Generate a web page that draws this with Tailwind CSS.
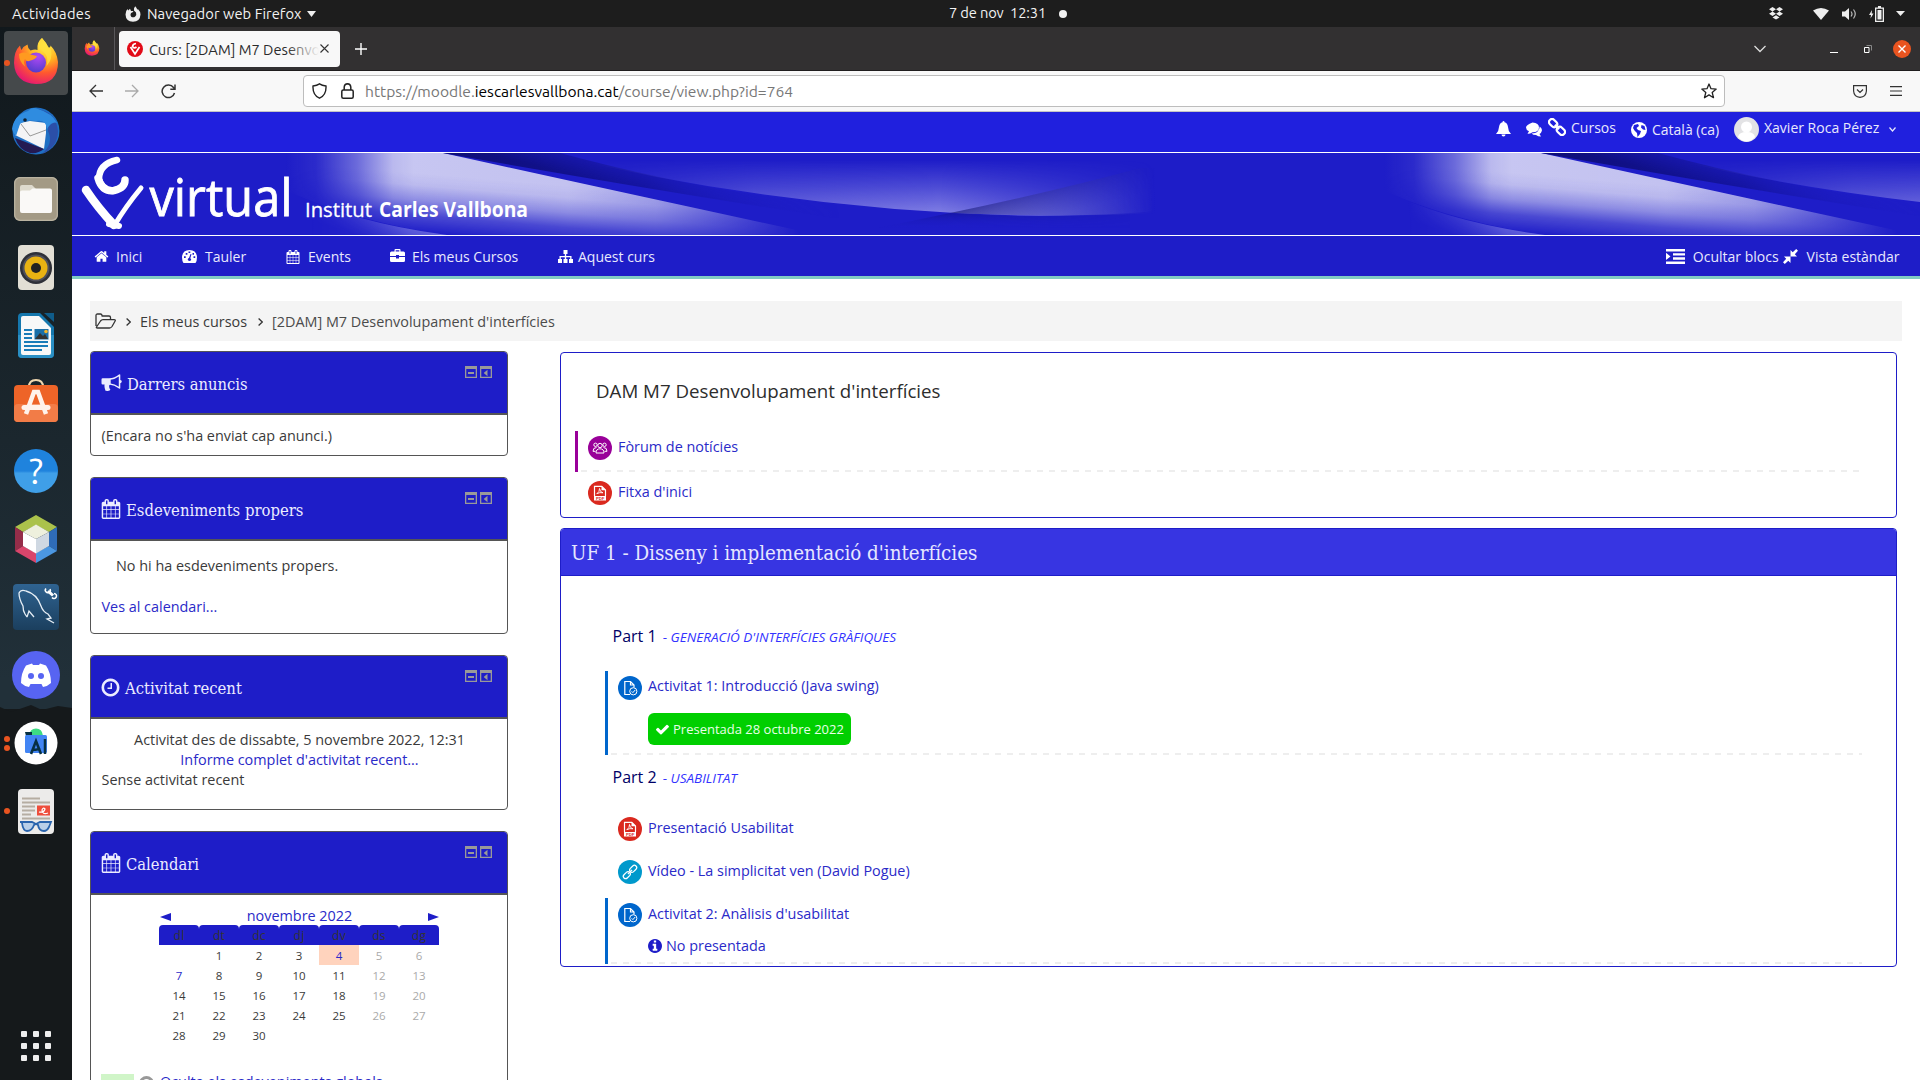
<!DOCTYPE html>
<html lang="ca">
<head>
<meta charset="utf-8">
<title>Curs: [2DAM] M7 Desenvolupament d'interfícies</title>
<script src="https://cdn.jsdelivr.net/npm/@tailwindcss/browser@4"></script>
</head>
<body class="flex h-[1080px] w-[1920px] flex-col overflow-hidden bg-white font-['Open_Sans',sans-serif] text-[14.400px] leading-5 text-[#3a3a3a]">

<svg class="absolute size-0">
  <defs>
    <symbol id="home" viewBox="0 0 1792 1792"><path d="M1472 992v480q0 26-19 45t-45 19h-384v-384h-256v384h-384q-26 0-45-19t-19-45v-480q0-1 .5-3t.5-3l575-474 575 474q1 2 1 6zm223-69l-62 74q-8 9-21 11h-3q-13 0-21-7l-692-577-692 577q-12 8-24 7-13-2-21-11l-62-74q-8-10-7-23.5t11-21.500l719-599q32-26 76-26t76 26l244 204v-195q0-14 9-23t23-9h192q14 0 23 9t9 23v408l219 182q10 8 11 21.500t-7 23.500z"/></symbol>
    <symbol id="cal" viewBox="0 0 1792 1792"><path d="M192 1664h288v-288h-288v288zm352 0h320v-288h-320v288zm-352-352h288v-320h-288v320zm352 0h320v-320h-320v320zm-352-384h288v-288h-288v288zm736 736h320v-288h-320v288zm-384-736h320v-288h-320v288zm768 736h288v-288h-288v288zm-384-352h320v-320h-320v320zm-352-864v-288q0-13-9.500-22.500t-22.500-9.500h-64q-13 0-22.500 9.500t-9.500 22.500v288q0 13 9.500 22.500t22.500 9.500h64q13 0 22.500-9.500t9.500-22.500zm736 864h288v-320h-288v320zm-384-384h320v-288h-320v288zm384 0h288v-288h-288v288zm32-480v-288q0-13-9.500-22.500t-22.500-9.500h-64q-13 0-22.500 9.500t-9.500 22.500v288q0 13 9.500 22.500t22.500 9.500h64q13 0 22.500-9.500t9.500-22.500zm384-64v1280q0 52-38 90t-90 38h-1408q-52 0-90-38t-38-90v-1280q0-52 38-90t90-38h128v-96q0-66 47-113t113-47h64q66 0 113 47t47 113v96h384v-96q0-66 47-113t113-47h64q66 0 113 47t47 113v96h128q52 0 90 38t38 90z"/></symbol>
    <symbol id="clock" viewBox="0 0 1792 1792"><path d="M1024 544v448q0 14-9 23t-23 9h-320q-14 0-23-9t-9-23v-64q0-14 9-23t23-9h224v-352q0-14 9-23t23-9h64q14 0 23 9t9 23zm416 352q0-148-73-273t-198-198-273-73-273 73-198 198-73 273 73 273 198 198 273 73 273-73 198-198 73-273zm224 0q0 209-103 385.500t-279.500 279.500-385.500 103-385.500-103-279.500-279.500-103-385.500 103-385.500 279.500-279.500 385.500-103 385.500 103 279.500 279.500 103 385.500z"/></symbol>
    <symbol id="info" viewBox="128 128 1536 1536"><path d="M1152 1376v-160q0-14-9-23t-23-9h-96v-512q0-14-9-23t-23-9h-320q-14 0-23 9t-9 23v160q0 14 9 23t23 9h96v320h-96q-14 0-23 9t-9 23v160q0 14 9 23t23 9h448q14 0 23-9t9-23zm-128-896v-160q0-14-9-23t-23-9h-192q-14 0-23 9t-9 23v160q0 14 9 23t23 9h192q14 0 23-9t9-23zm640 416q0 209-103 385.500t-279.500 279.500-385.500 103-385.500-103-279.500-279.500-103-385.500 103-385.500 279.500-279.500 385.500-103 385.500 103 279.500 279.500 103 385.500z"/></symbol>
    <symbol id="check" viewBox="120 290 1560 1240"><path d="M1671 566q0 40-28 68l-724 724-136 136q-28 28-68 28t-68-28l-136-136-362-362q-28-28-28-68t28-68l136-136q28-28 68-28t68 28l294 295 656-657q28-28 68-28t68 28l136 136q28 28 28 68z"/></symbol>
    <symbol id="horn" viewBox="0 0 21 18"><path d="M0.500 5.500Q0.500 4.300 1.700 4.300H8Q14 4 18 0.500Q19.300-.2 19.300 1V6Q20.800 6.300 20.800 7.600T19.300 9.200V14Q19.300 15.300 18 14.500Q13 11 9 10.700Q7.600 11.500 8.300 13Q8 14.300 9.400 15.300Q9.200 17 6.500 16.900L4.500 16.700Q3 13 3.600 10.500H1.700Q.5 10.500 .5 9.300ZM17.800 12.700V2.500Q13.500 5.500 9.700 5.700V9.400Q13.500 9.700 17.800 12.700Z" fill-rule="evenodd"/></symbol>
    <symbol id="dock" viewBox="0 0 27 12"><path fill="#999" fill-rule="evenodd" d="M0 0H12V12H0ZM1.300 3V10.700H10.700V3ZM15 0H27V12H15ZM16.300 3V10.700H25.700V3Z"/><path d="M3 6H9V8H3ZM22.500 3.700V10.300L18.700 7Z" fill="#999"/></symbol>
    <symbol id="assign" viewBox="0 0 24 24"><circle cx="12" cy="12" r="12" fill="#0066cc"/><path d="M12 18.500H6.800V5.500H12.500L16 9V11.500M12.500 5.500V9H16" fill="none" stroke="#fff" stroke-width="1.200"/><circle cx="15.300" cy="15.300" r="3.600" fill="#0066cc" stroke="#fff"/><path d="M13.700 15.400L14.900 16.600L17.200 14" fill="none" stroke="#fff"/></symbol>
    <symbol id="pdf" viewBox="0 0 24 24"><circle cx="12" cy="12" r="12" fill="#da291f"/><path d="M6.500 15V5.400H13.800L17.500 9V15" fill="none" stroke="#fff" stroke-width="1.200"/><path d="M13.500 5V9.300H18ZM6 15H18V19.500H6Z" fill="#fff"/><path d="M8.800 12.700Q11.700 11 11.500 7.500Q12 11.300 15 11.800Q12 11 8.800 12.700Z" fill="none" stroke="#fff" stroke-width=".9"/><text x="8" y="18.800" font-size="4.200" font-weight="700" fill="#da291f" font-family="Liberation Sans, sans-serif">PDF</text></symbol>
    <symbol id="link" viewBox="0 0 24 24"><g fill="none" stroke-width="1.200" transform="rotate(-45 12 12)"><rect x="3.500" y="9.700" width="8" height="4.600" rx="2.300"/><rect x="12.500" y="9.700" width="8" height="4.600" rx="2.300"/><path d="M9 12H15"/></g></symbol>
    <radialGradient id="ffo" cx=".7" cy=".15" r="1"><stop offset="0" stop-color="#fff14a"/><stop offset=".35" stop-color="#ffb321"/><stop offset=".6" stop-color="#ff5a2e"/><stop offset=".95" stop-color="#e3107a"/></radialGradient>
    <radialGradient id="ffp" cx=".6" cy=".2" r=".9"><stop offset="0" stop-color="#b04af5"/><stop offset="1" stop-color="#4a3ac8"/></radialGradient>
    <symbol id="firefox" viewBox="0 0 46 48"><path d="M29 1Q34 6 35.500 11Q38 10 37.500 8.500Q44 15 45 25Q45 47 23 47Q2 46 1 26Q1 14 7 8.500Q7.500 11.500 8.500 13Q10.500 9 14.500 7.500Q14.500 11 17.500 13.500Q22 12 24.500 13Q23.500 5 29 1Z" fill="url(#ffo)"/><circle cx="23" cy="25.500" r="10" fill="url(#ffp)"/><path d="M6 17Q12 14 17.500 17.500L24 19Q23 22 17.500 23.500Q14 25.500 12 22Q10 25 12.500 30Q6 25 6 17Z" fill="#ff9a20"/><path d="M26 12Q37 17 33.500 29Q40 22 38 13Q33 7 29 1Q24 6 26 12Z" fill="#ffdf3f" opacity=".8"/></symbol>
  </defs>
</svg>

<!-- GNOME top bar -->
<header class="relative flex h-[27px] shrink-0 items-center bg-[#1d1d1d] font-['Ubuntu','Open_Sans',sans-serif] text-[14.700px] text-[#f2f2f2]">
  <span class="ml-3 w-[113px] tracking-[.3px]">Actividades</span>
  <svg class="size-4" viewBox="0 0 16 16" fill="#eee"><path fill-rule="evenodd" d="M10.200.3Q12 2 12.200 3.700L12.900 3Q15.500 5.500 15.500 8.500Q15 15.700 8 15.800Q.8 15.500.5 8.500Q.6 4.800 2.500 3L3.200 4.500L5 2.800L6 4.900H8.500Q8 6.500 6 7Q4.800 9 6.200 10.700Q8 12 10 10.700Q12 9 11 6.500L9 4.500Q8.500 2 10.200.3Z"/></svg>
  <span class="ml-1.5 w-[154px] whitespace-nowrap tracking-[.06px]">Navegador web Firefox</span>
  <svg class="ml-[6px] h-[6px] w-[9px]" viewBox="0 0 9 6" fill="#eee"><path d="M0 0H9L4.500 6Z"/></svg>
  <span class="absolute top-[3px] left-[949px] tracking-[-.15px]">7 de nov&nbsp; 12:31</span>
  <span class="absolute left-[1059px] size-2 rounded-full bg-[#f2f2f2]"></span>
  <div class="ml-auto flex items-center pr-[15px]">
    <svg class="mr-[30px] h-[13px] w-[14px]" viewBox="0 0 14 13" fill="#eee"><path d="M3.500 0L7 2.200L3.500 4.400L0 2.200ZM10.500 0L14 2.200L10.500 4.400L7 2.200ZM3.500 4.600L7 6.800L3.500 9L0 6.800ZM10.500 4.600L14 6.800L10.500 9L7 6.800ZM7 8.200L10.500 10.400L7 12.600L3.500 10.400Z"/></svg>
    <svg class="mr-[13px] h-3 w-4" viewBox="0 0 16 12" fill="#eee"><path d="M0 2.500Q8-2.500 16 2.500L8 12Z"/></svg>
    <svg class="mr-3 h-3.5 w-[15px]" viewBox="0 0 15 14" fill="#eee"><path d="M0 4.500H3L7 1V13L3 9.500H0Z"/><path d="M9 4.500Q11 7 9 9.500M11.500 2.500Q15 7 11.500 11.500" fill="none" stroke="#bbb" stroke-width="1.200"/></svg>
    <svg class="mr-3 h-4 w-[15px]" viewBox="0 0 15 16" fill="#eee"><path d="M3 4L0 9H2L1.500 12.500L4.500 7.500H2.700ZM9 0H12V1.500H15V16H6V1.500H9ZM7.300 2.800V14.700H13.700V2.800Z" fill-rule="evenodd"/><path d="M8.500 4H12.500V13.500H8.500Z"/></svg>
    <svg class="h-[5px] w-[9px]" viewBox="0 0 9 5" fill="#eee"><path d="M0 0H9L4.500 5Z"/></svg>
  </div>
</header>

<div class="flex min-h-0 flex-1">
  <!-- Dock -->
  <aside class="flex w-[72px] shrink-0 flex-col items-center bg-linear-to-b from-[#11181c] from-0% via-[#213039] via-62% to-[#213039] to-64% pt-0.5">
    <div class="relative flex h-[68px] w-full items-center justify-center"><div class="flex size-16 items-center justify-center rounded-[4px] bg-[#45494b]"><svg class="-mt-1 h-12 w-[46px]"><use href="#firefox"/></svg></div><i class="absolute left-1 size-1.5 rounded-full bg-[#e95420]"></i></div>
    <div class="flex h-[68px] items-center"><svg class="size-12" viewBox="0 0 48 48"><circle cx="24" cy="24" r="23.500" fill="#1f6fc4"/><path d="M24 2Q44 4 46 24Q46 40 30 47Q42 36 36 24Q38 12 24 2Z" fill="#2b4fa8"/><path d="M3 28L8 16L18 14L34 16V26L32 42Z" fill="#f4f4f6"/><path d="M9 17L18 29L34 23" fill="none" stroke="#999" stroke-width="1"/><path d="M0 22Q2 8 16 4Q20-1 26 2Q40 6 45 16Q40 14 35 22Q34 12 24 14Q14 12 8 17L4 29Q1 26 0 22Z" fill="#2f8ce0"/><path d="M3 31L32 42Q26 47 18 46Q7 43 3 31Z" fill="#241a52"/><circle cx="13" cy="13" r="1.800" fill="#123"/></svg></div>
    <div class="flex h-[68px] items-center"><svg class="size-11" viewBox="0 0 44 44"><rect width="44" height="44" rx="6" fill="#a39a85"/><rect x=".7" y=".7" width="42.600" height="42.600" rx="5.500" fill="none" stroke="#bab3a1" stroke-width="1.200"/><path d="M6 10Q6 8 8 8H18L22 12H34V20H6Z" fill="#dedacd"/><path d="M6 15Q6 13.500 8 13.500H16L18.500 11.500H36Q38 11.500 38 13.500V34Q38 36 36 36H8Q6 36 6 34Z" fill="#faf9f7"/></svg></div>
    <div class="flex h-[68px] items-center"><svg class="h-[45px] w-9" viewBox="0 0 36 45"><rect width="36" height="45" rx="4" fill="#e2dfd5"/><circle cx="18" cy="23" r="16" fill="#2e3038"/><circle cx="18" cy="23" r="13.500" fill="#50505a"/><circle cx="18" cy="23" r="11.500" fill="#e9b212"/><circle cx="18" cy="23" r="5" fill="#222"/></svg></div>
    <div class="flex h-[68px] items-center"><svg class="h-[45px] w-9" viewBox="0 0 36 45"><path d="M4 0H22L36 14V41Q36 45 32 45H4Q0 45 0 41V4Q0 0 4 0Z" fill="#1577ad"/><path d="M0 22H36V41Q36 45 32 45H4Q0 45 0 41Z" fill="#2a8fc4"/><path d="M26 0H36V9Z" fill="#0f5c8a"/><path d="M5 3H21L33 15V40Q33 42 31 42H5Q3 42 3 40V5Q3 3 5 3Z" fill="#f8f8f8"/><path d="M6 17H14M6 21H14M6 25H14M6 29H30M6 33H30M6 37H24" stroke="#1a7cb8" stroke-width="2"/><rect x="16.500" y="16" width="14" height="10.500" fill="#1a6fa8"/><path d="M17 26L22 20L25 23L27 21L30 26Z" fill="#333"/><circle cx="28" cy="18.500" r="1.800" fill="#f5b52a"/></svg></div>
    <div class="flex h-[68px] items-center pb-1"><svg class="h-[46px] w-11" viewBox="0 0 44 46"><path d="M15 9Q15 2 22 2T29 9" fill="none" stroke="#f0d8b0" stroke-width="2"/><rect y="7" width="44" height="37" rx="4" fill="#ee6428"/><rect y="26" width="44" height="18" rx="4" fill="#f27c47"/><path d="M12 36L20 14H24L32 36M15.500 29H28" fill="none" stroke="#fff3ec" stroke-width="4.500"/><path d="M10 29.500H34" stroke="#fff3ec" stroke-width="5" stroke-linecap="round"/></svg></div>
    <div class="flex h-[68px] items-center"><div class="flex size-11 items-center justify-center rounded-full bg-linear-to-b from-[#1f83dd] from-50% to-[#3f9fe8] to-55% font-['Ubuntu','Open_Sans',sans-serif] text-[36px] text-white">?</div></div>
    <div class="flex h-[68px] items-center"><svg class="h-12 w-[42px]" viewBox="0 0 42 48"><path d="M21 0L42 12L34 17L21 10L8 17L0 12Z" fill="#abc24b"/><path d="M0 12L8 17V31L0 36Z" fill="#952d49"/><path d="M42 12L34 17V31L42 36Z" fill="#2f6cb8"/><path d="M0 36L8 31L21 38V48Z" fill="#d9456b"/><path d="M42 36L34 31L21 38V48Z" fill="#4b97e2"/><path d="M21 9.500L34 17L21 24L8 17Z" fill="#eef0dd"/><path d="M8 17L21 24V38.500L8 31Z" fill="#fff"/><path d="M34 17L21 24V38.500L34 31Z" fill="#cfd8e2"/></svg></div>
    <div class="flex h-[68px] items-center"><svg class="size-[46px]" viewBox="0 0 46 46"><defs><linearGradient id="sky" x2="0" y2="1"><stop stop-color="#2f6391"/><stop offset="1" stop-color="#1b3f5e"/></linearGradient></defs><rect width="46" height="46" rx="4" fill="url(#sky)"/><path d="M14 33L12 30Q10 27 10 22Q6 15 6 9Q8 5 13 7Q24 10 28 22Q30 28 35 30L38 34L34 35L41 39M14 33L16 27L21 33" fill="none" stroke="#e6eef5" stroke-width="1.300"/><path d="M35 7L40 11.500" stroke="#fff" stroke-width="3"/><path d="M33 4.500A2.500 2.500 0 1 0 37 5M39 13.500A2.500 2.500 0 1 0 41 9.500" fill="none" stroke="#fff" stroke-width="1.500"/></svg></div>
    <div class="flex h-[68px] items-center"><svg class="size-12" viewBox="0 0 48 48"><circle cx="24" cy="24" r="24" fill="#5764f2"/><path d="M14 14.500L20 12.500L21 14H27L28 12.500L34 14.500Q39 22 39 32Q36 35 31 36L29.500 33H18.500L17 36Q12 35 9 32Q9 22 14 14.500Z" fill="#fff"/><circle cx="19" cy="25" r="3" fill="#5764f2"/><circle cx="29" cy="25" r="3" fill="#5764f2"/></svg></div>
    <div class="relative flex w-full flex-1 flex-col items-center bg-[#15191b]">
      <svg class="absolute -top-1 h-2 w-[72px]" viewBox="0 0 72 8" fill="#15191b"><path d="M0 2L11 7L31 0L42 5L58 1L72 3V8H0Z"/></svg>
      <div class="relative flex h-[68px] w-full items-center justify-center"><svg class="size-11" viewBox="0 0 44 44"><circle cx="22" cy="22" r="21.500" fill="#fff"/><path d="M15 14.500Q16 7.500 22 7.500T29 14.500Z" fill="#3ddc84"/><path d="M11 11H18V15H12Z" fill="#073042"/><rect x="11" y="14" width="22" height="18" rx="1.500" fill="#4285f4"/><path d="M17 33L22 20L27 33M18.500 28Q22 30 26 27" fill="none" stroke="#073042" stroke-width="2.600"/><path d="M31 18V33" stroke="#073042" stroke-width="2.500"/></svg><i class="absolute top-[27px] left-1 size-1.5 rounded-full bg-[#e95420]"></i><i class="absolute top-9 left-1 size-1.5 rounded-full bg-[#e95420]"></i></div>
      <div class="relative flex h-[68px] w-full items-center justify-center"><svg class="h-[45px] w-9" viewBox="0 0 36 45"><rect width="36" height="45" rx="4" fill="#ecebea"/><path d="M4 9.500H22M4 13.500H32M4 17.500H17M4 21.500H17M4 25.500H13M4 29.500H32" stroke="#b5ada2" stroke-width="1.800"/><rect x="19" y="16.500" width="13" height="10" fill="#ee4e3c"/><path d="M21 23Q26 24 27 20Q25 18 24 21Q24 26 30 24" fill="none" stroke="#fff" stroke-width="1.200"/><path d="M2 33H14L18 35L22 33H33L31 38Q29 42 26 42Q21 42 20 36Q18 34 16 36Q14 42 9 42Q5 42 4 34" fill="#b9cfe8" stroke="#2a64ad" stroke-width="1.800"/></svg><i class="absolute left-1 size-1.5 rounded-full bg-[#e95420]"></i></div>
      <div class="mt-auto mb-[19px] grid grid-cols-3 gap-1.5">
        <i class="size-1.5 rounded-[1px] bg-[#eee]"></i><i class="size-1.5 rounded-[1px] bg-[#eee]"></i><i class="size-1.5 rounded-[1px] bg-[#eee]"></i><i class="size-1.5 rounded-[1px] bg-[#eee]"></i><i class="size-1.5 rounded-[1px] bg-[#eee]"></i><i class="size-1.5 rounded-[1px] bg-[#eee]"></i><i class="size-1.5 rounded-[1px] bg-[#eee]"></i><i class="size-1.5 rounded-[1px] bg-[#eee]"></i><i class="size-1.5 rounded-[1px] bg-[#eee]"></i>
      </div>
    </div>
  </aside>

  <div class="flex min-w-0 flex-1 flex-col">
    <!-- Browser tabs -->
    <div class="flex h-11 shrink-0 items-center border-b border-[#1f1d1e] bg-[#323031] font-['Ubuntu','Open_Sans',sans-serif] text-[14.700px]">
      <div class="flex h-full w-[43px] items-center border-r border-[#59575a] pl-3"><svg class="-mt-0.5 size-4"><use href="#firefox"/></svg></div>
      <div class="ml-1 flex h-9 w-[221px] items-center rounded-[4px] bg-[#f8f8f8] pl-2">
        <svg class="size-4" viewBox="0 0 16 16"><circle cx="8" cy="8" r="8" fill="#e20a17"/><path d="M9 2.500Q5.500 3 5.600 5.500Q7 8 9.500 6M3.500 6L8 13L12.500 6" fill="none" stroke="#fff" stroke-width="1.700"/></svg>
        <div class="relative ml-1.5 w-[170px] overflow-hidden pt-[3px] whitespace-nowrap text-[#2b2b2b]">Curs: [2DAM] M7 Desenvolupament<span class="absolute inset-y-0 right-0 w-8 bg-linear-to-r from-[#f8f8f8]/0 to-[#f8f8f8]"></span></div>
        <svg class="ml-px size-[9px]" viewBox="0 0 9 9" stroke="#333" stroke-width="1.100"><path d="M.5.5L8.500 8.500M8.500.5L.5 8.500"/></svg>
      </div>
      <svg class="mt-px ml-[15px] size-3" viewBox="0 0 12 12" stroke="#fff" stroke-width="1.400"><path d="M6 0V12M0 6H12"/></svg>
      <div class="ml-auto flex items-center pr-[9px]">
        <svg class="mr-[64px] h-2 w-3" viewBox="0 0 12 8" fill="none" stroke="#ddd" stroke-width="1.300"><path d="M.5 1L6 6.500L11.500 1"/></svg>
        <i class="mt-[7px] mr-[26px] h-px w-2 bg-white"></i>
        <svg class="mr-[21px] size-2" viewBox="0 0 8 8" fill="none" stroke="#fff"><path d="M.5 2.500H5V7.500H.5Z"/><path d="M2.500.5H7.500V5.500" stroke="#888"/></svg>
        <svg class="size-[18px]" viewBox="0 0 18 18"><circle cx="9" cy="9" r="9" fill="#e95420"/><path d="M5.500 5.500L12.500 12.500M12.500 5.500L5.500 12.500" stroke="#fff" stroke-width="1.400"/></svg>
      </div>
    </div>

    <!-- Address bar -->
    <div class="flex h-[41px] shrink-0 items-center border-b border-[#c4c4c4] bg-[#f8f8f8] pl-[17px] font-['Ubuntu','Open_Sans',sans-serif] text-[15.600px] text-[#777]">
      <svg class="size-3.5" viewBox="0 0 14 14" fill="none" stroke="#333" stroke-width="1.300"><path d="M14 7H1M7 1L1 7L7 13"/></svg>
      <svg class="ml-[22px] size-3.5" viewBox="0 0 14 14" fill="none" stroke="#aaa" stroke-width="1.300"><path d="M0 7H13M7 1L13 7L7 13"/></svg>
      <svg class="ml-[22px] size-[15px]" viewBox="0 0 15 15" fill="none" stroke="#333" stroke-width="1.500"><path d="M13.500 9A6.300 6.300 0 1 1 12.500 3.500L14 5M14 .5V5.300H9.300"/></svg>
      <div class="ml-[127px] flex h-8 w-[1422px] items-center rounded-[4px] border border-[#bdbdbd] bg-white pl-[8px]">
        <svg class="h-4 w-[15px]" viewBox="0 0 15 16" fill="none" stroke="#222" stroke-width="1.400"><path d="M7.500.8Q10 2.500 14 3Q14.500 12 7.500 15.200Q.5 12 1 3Q5 2.500 7.500.8Z"/></svg>
        <svg class="ml-3.5 h-4 w-[13px]" viewBox="0 0 13 16" fill="none" stroke="#222" stroke-width="1.500"><rect x=".8" y="7" width="11.400" height="8.200" rx="1.500"/><path d="M3.200 7V4Q3.500 1 6.500.8Q9.500 1 9.800 4V7"/></svg>
        <span class="ml-[11px]">https://moodle.<span class="text-black">iescarlesvallbona.cat</span>/course/view.php?id=764</span>
        <svg class="mr-[7px] ml-auto size-4" viewBox="0 0 16 16" fill="none" stroke="#222" stroke-width="1.300"><path d="M8 1L10 5.700L15.200 6.100L11.200 9.500L12.500 14.700L8 11.900L3.500 14.700L4.800 9.500L.8 6.100L6 5.700Z" stroke-linejoin="round"/></svg>
      </div>
      <svg class="ml-auto h-[13px] w-3.5" viewBox="0 0 14 13" fill="none" stroke="#333" stroke-width="1.200"><path d="M.6.600H13.400V6Q13 12 7 12.400Q1 12 .6 6ZM4 4.500L7 7.500L10 4.500"/></svg>
      <svg class="mr-[18px] ml-[23px] h-[10px] w-3" viewBox="0 0 12 10" stroke="#333" stroke-width="1.200"><path d="M0 .6H12M0 5H12M0 9.400H12"/></svg>
    </div>

    <!-- Moodle user bar -->
    <div class="flex h-10 shrink-0 justify-end bg-[#2020de] text-[14px] text-[#e9e9fd]">
      <svg class="mt-[9px] h-4 w-[15px] fill-white" viewBox="0 0 15 16"><path d="M7.500 0Q8.500 0 8.500 1.300Q11.500 2 12 6Q12.200 10.500 15 13H0Q2.800 10.500 3 6Q3.500 2 6.500 1.300Q6.500 0 7.500 0ZM5.500 13.500H9.500Q9.500 15.500 7.500 15.500T5.500 13.500Z"/></svg>
      <svg class="mt-[10px] ml-[15px] h-[15px] w-4 fill-white" viewBox="0 0 16 15"><path d="M6.500.5Q13 1 13 5.500T6.500 10.300Q3.500 12.200 1.500 11.800L3 9.300Q0 8 0 5.500T6.500.5ZM13.700 4.500Q16.500 6.500 15.800 9T13.500 12L15 14.500Q12 14.500 10 13Q7 13 5.500 11.500Q13.500 11 13.700 4.500Z"/></svg>
      <svg class="mt-[6px] ml-[6px] size-[18px]" viewBox="0 0 18 18"><g transform="rotate(45 9 9)" fill="none" stroke="#fff" stroke-width="2.200"><rect x="-1" y="6" width="9" height="6" rx="3"/><rect x="10" y="6" width="9" height="6" rx="3"/><path d="M6 9H12"/></g></svg>
      <span class="mt-1.5 ml-[5px] w-[60px]">Cursos</span>
      <svg class="mt-[10px] size-4" viewBox="0 0 16 16"><circle cx="8" cy="8" r="8" fill="#fff"/><path d="M3 3L7 2L8 4L5.500 6L7 8L10 9L9 12L6.500 15L6 11L3.500 8.500L2 6ZM10.500 3L13.500 4L14.500 8L12 7.500L10 5.500Z" fill="#2020de"/></svg>
      <span class="mt-2 ml-[5px] w-[82px]">Català (ca)</span>
      <svg class="mt-[5px] size-[25px]" viewBox="0 0 25 25"><circle cx="12.500" cy="12.500" r="12.500" fill="#e3e3e5"/><circle cx="12.500" cy="10" r="5.500" fill="#fff"/><path d="M4 20Q5 15 12.500 15T21 20Q17 24.500 12.500 24.500T4 20Z" fill="#fff"/></svg>
      <span class="mt-1.5 ml-[5px] w-[125px]">Xavier Roca Pérez</span>
      <svg class="mt-[15px] mr-[24px] h-[5px] w-[7px]" viewBox="0 0 7 5" fill="none" stroke="#e9e9fd" stroke-width="1.200"><path d="M.5.5L3.500 4L6.500.5"/></svg>
    </div>

    <!-- Banner -->
    <div class="h-[84px] shrink-0 border-y border-white bg-[#1e1dc8]">
      <svg class="block h-[82px] w-[1848px]" viewBox="72 153 1848 82">
        <defs>
          <linearGradient id="gx" gradientUnits="userSpaceOnUse" x1="285" x2="800" y1="0" y2="0"><stop stop-color="#cccbf2" stop-opacity="0"/><stop offset=".06" stop-color="#cccbf2" stop-opacity=".08"/><stop offset=".14" stop-color="#cccbf2" stop-opacity=".45"/><stop offset=".21" stop-color="#cccbf2" stop-opacity=".9"/><stop offset=".25" stop-color="#cccbf2" stop-opacity=".97"/><stop offset=".55" stop-color="#cccbf2" stop-opacity=".95"/><stop offset=".72" stop-color="#cccbf2" stop-opacity=".75"/><stop offset="1" stop-color="#cccbf2" stop-opacity="0"/></linearGradient>
          <linearGradient id="gy" gradientUnits="userSpaceOnUse" x1="450" x2="445" y1="176" y2="235"><stop stop-color="#fff"/><stop offset=".2" stop-color="#eee"/><stop offset=".45" stop-color="#aaa"/><stop offset=".7" stop-color="#444"/><stop offset="1" stop-color="#000"/></linearGradient>
          <mask id="lightMask" maskUnits="userSpaceOnUse" x="200" y="150" width="700" height="90"><rect x="200" y="150" width="700" height="90" fill="url(#gy)"/></mask>
          <linearGradient id="g2" gradientUnits="userSpaceOnUse" x1="310" x2="450" y1="0" y2="0"><stop stop-color="#aaaaf0" stop-opacity="0"/><stop offset=".7" stop-color="#aaaaf0" stop-opacity=".55"/><stop offset="1" stop-color="#aaaaf0" stop-opacity=".5"/></linearGradient>
          <linearGradient id="gl" gradientUnits="userSpaceOnUse" x1="380" x2="371" y1="213" y2="240"><stop stop-color="#fff"/><stop offset="1" stop-color="#222"/></linearGradient>
          <mask id="lowMask" maskUnits="userSpaceOnUse" x="200" y="150" width="400" height="90"><rect x="200" y="150" width="400" height="90" fill="url(#gl)"/></mask>
          <linearGradient id="gd" gradientUnits="userSpaceOnUse" x1="450" x2="840" y1="0" y2="0"><stop stop-color="#0e0e78"/><stop offset=".5" stop-color="#13139a"/><stop offset="1" stop-color="#1e1dc8" stop-opacity="0"/></linearGradient>
          <linearGradient id="gdf" gradientUnits="userSpaceOnUse" x1="600" x2="608" y1="182" y2="150"><stop stop-color="#fff"/><stop offset="1" stop-color="#222"/></linearGradient>
          <mask id="md" maskUnits="userSpaceOnUse" x="400" y="150" width="500" height="90"><rect x="400" y="150" width="500" height="90" fill="url(#gdf)"/></mask>
          <linearGradient id="gv" gradientUnits="userSpaceOnUse" x1="0" x2="0" y1="160" y2="216"><stop stop-color="#8b89e6" stop-opacity="0"/><stop offset=".5" stop-color="#8b89e6" stop-opacity=".45"/><stop offset="1" stop-color="#8b89e6" stop-opacity=".95"/></linearGradient>
          <linearGradient id="gh" gradientUnits="userSpaceOnUse" x1="540" x2="1155" y1="0" y2="0"><stop stop-color="#000"/><stop offset=".35" stop-color="#ccc"/><stop offset=".65" stop-color="#fff"/><stop offset="1" stop-color="#000"/></linearGradient>
          <mask id="mv" maskUnits="userSpaceOnUse" x="500" y="150" width="700" height="90"><rect x="500" y="150" width="700" height="90" fill="url(#gh)"/></mask>
          <linearGradient id="gw" gradientUnits="userSpaceOnUse" x1="1030" x2="1038" y1="188" y2="220"><stop stop-color="#22228c" stop-opacity=".95"/><stop offset="1" stop-color="#6a6abf" stop-opacity=".75"/></linearGradient>
          <linearGradient id="gs" gradientUnits="userSpaceOnUse" x1="0" x2="0" y1="213" y2="228"><stop stop-color="#12128f" stop-opacity=".6"/><stop offset="1" stop-color="#1e1dc8" stop-opacity="0"/></linearGradient>
          <g id="wave">
            <path d="M250 153H443Q620 192 820 235H445Q350 220 285 190L250 175Z" fill="url(#gx)" mask="url(#lightMask)"/>
            <path d="M285 190Q350 222 447 235H285Z" fill="url(#g2)" mask="url(#lowMask)"/>
            <path d="M443 153H560Q720 196 860 207L860 222Q640 188 443 153Z" fill="url(#gd)" mask="url(#md)"/>
            <path d="M545 153Q790 212 1040 216Q1120 215 1155 211V153Z" fill="url(#gv)" mask="url(#mv)"/>
            <path d="M950 213Q1060 190 1140 168H1200V210Q1100 219 950 213Z" fill="url(#gw)" mask="url(#mv)"/>
            <path d="M860 232L950 213Q1040 219 1130 214V232Z" fill="url(#gs)" mask="url(#mv)"/>
          </g>
        </defs>
        <use href="#wave"/><use href="#wave" x="1098"/>
        <g fill="none" stroke="#fff" stroke-linecap="round" stroke-linejoin="round"><path d="M117 160Q99 164 99 179Q102 191 113 191" stroke-width="6.500"/><path d="M98 178Q102 192 114 190.500Q125 188 125 180" stroke-width="7.500"/><path d="M86 190Q98 208 114 225" stroke-width="8.500"/><path d="M114 226Q126 206 141 188" stroke-width="5"/><path d="M109 224L119 226" stroke-width="6"/></g>
        <g fill="#fff" font-family="Open Sans, sans-serif"><text x="149.500" y="216" font-size="51" stroke="#fff" stroke-width=".8" textLength="143" lengthAdjust="spacingAndGlyphs">virtual</text><text x="305" y="216.500" font-size="20.500" stroke="#fff" stroke-width=".3" textLength="67" lengthAdjust="spacingAndGlyphs">Institut</text><text x="379" y="216.500" font-size="20.500" font-weight="700" textLength="149" lengthAdjust="spacingAndGlyphs">Carles Vallbona</text></g>
      </svg>
    </div>

    <!-- Main menu -->
    <nav class="flex h-[43px] shrink-0 items-center border-b-3 border-[#80cbc4] bg-[#1e1dc8] pt-px pl-[22px] text-[14px] text-[#e9e9fd]">
      <svg class="size-[15px] fill-white"><use href="#home"/></svg><span class="ml-[7px] w-[66px]">Inici</span>
      <svg class="h-[13px] w-[15px] fill-white" viewBox="0 0 15 13"><path fill-rule="evenodd" d="M7.500 0Q14.500 0 15 7Q15 11 13.500 13H1.500Q0 11 0 7Q.5 0 7.500 0ZM8.500 4L7 8Q5.500 8.500 5.800 10Q7.500 12 9.200 10Q9.300 9 8.300 8.300L9.500 4.200ZM2 6.300V8H3.700V6.300ZM3.700 3V4.700H5.400V3ZM6.500 1.500V3H8.300V1.500ZM10.500 3V4.700H12V3ZM11.500 6.300V8H13.200V6.300Z"/></svg><span class="ml-2 w-[81px]">Tauler</span>
      <svg class="size-[14px] fill-white"><use href="#cal"/></svg><span class="ml-2 w-[82px]">Events</span>
      <svg class="-mt-0.5 h-[13px] w-[15px] fill-white" viewBox="0 0 15 13"><path fill-rule="evenodd" d="M4.500 2.500V1Q4.500 0 5.500 0H9.500Q10.500 0 10.500 1V2.500H13.500Q15 2.500 15 4V7H9V6H6V7H0V4Q0 2.500 1.500 2.500ZM5.700 1.200V2.500H9.300V1.200ZM0 8H6V9.500H9V8H15V11.500Q15 13 13.500 13H1.500Q0 13 0 11.500Z"/></svg><span class="ml-[7px] w-[146px]">Els meus Cursos</span>
      <svg class="h-[13px] w-[15px] fill-white" viewBox="0 0 15 13"><path d="M5.500 0H9.500V4H8.200V6H13.500V9H15V13H11V9H12.200V7.200H8.200V9H9.500V13H5.500V9H6.800V7.200H2.800V9H4V13H0V9H1.500V6H6.800V4H5.500Z"/></svg><span class="ml-[5px]">Aquest curs</span>
      <svg class="ml-auto h-[15px] w-[19px] fill-white" viewBox="0 0 19 15"><path d="M0 0H19V2.500H0ZM7 4.200H19V6.600H7ZM7 8.300H19V10.700H7ZM0 12.500H19V15H0ZM0 3.800L4.500 7.500L0 11Z"/></svg><span class="ml-2">Ocultar blocs</span>
      <svg class="ml-1 size-[15px] fill-white" viewBox="0 0 15 15"><path d="M1 7.500H7.500V14L5.300 11.800L1.800 15L0 13.200L3.200 9.700ZM7.500 7.500V1L9.700 3.200L13.200 0L15 1.800L11.800 5.300L14 7.500Z"/></svg><span class="mr-[20.500px] ml-[9px]">Vista estàndar</span>
    </nav>

    <!-- Page -->
    <main class="min-h-0 flex-1 overflow-hidden pt-[22px] pl-[18px]">
      <div class="flex h-10 w-[1812px] items-center bg-[#f4f4f4] pl-[5px]">
        <svg class="h-4 w-[21px]" viewBox="0 0 21 16" fill="none" stroke="#333" stroke-width="1.300" stroke-linejoin="round"><path d="M1 13V2.500Q1 1 2.500 1H5.500Q7 1 7 2.500V3H14Q15.500 3 15.500 4.500V6.500M1.500 14L5.500 8Q6.500 6.600 8 6.600H19Q21 6.600 20 8.200L17 13.500Q16 15 14.500 15H2.500Q1 15 1.500 14Z"/></svg>
        <svg class="mt-px ml-[10px] h-[8px] w-[5px]" viewBox="0 0 5 8" fill="none" stroke="#333" stroke-width="1.300"><path d="M.6.5L4.300 4L.6 7.500"/></svg>
        <span class="ml-[9px] pt-px">Els meus cursos</span>
        <svg class="mt-px ml-[11px] h-[8px] w-[5px]" viewBox="0 0 5 8" fill="none" stroke="#333" stroke-width="1.300"><path d="M.6.5L4.300 4L.6 7.500"/></svg>
        <span class="ml-[9px] pt-px text-[#4b4b4b]">[2DAM] M7 Desenvolupament d'interfícies</span>
      </div>

      <div class="flex pt-[10px]">
        <div class="mr-[52px] flex w-[418px] flex-col gap-[21px]">
          <section class="h-[105px] overflow-hidden rounded-[4px] border border-[#555]">
            <div class="relative flex h-[63px] items-center border-b-2 border-[#555] bg-[#1e1dc8] pt-[5px] pl-[10px] text-[#ececff]"><svg class="mt-[-4px] h-[18px] w-[21px] fill-current"><use href="#horn"/></svg><h2 class="ml-[5px] font-['DejaVu_Serif_Condensed','DejaVu_Serif',serif] text-[16.400px]">Darrers anuncis</h2><svg class="absolute top-[14px] right-[15px] h-3 w-[27px]"><use href="#dock"/></svg></div>
            <p class="pt-[11px] pl-[10.500px]">(Encara no s'ha enviat cap anunci.)</p>
          </section>
          <section class="h-[157px] overflow-hidden rounded-[4px] border border-[#555]">
            <div class="relative flex h-[63px] items-center border-b-2 border-[#555] bg-[#1e1dc8] pt-[5px] pl-[10px] text-[#ececff]"><svg class="mt-[-4px] size-5 fill-current"><use href="#cal"/></svg><h2 class="ml-[5px] font-['DejaVu_Serif_Condensed','DejaVu_Serif',serif] text-[16.500px]">Esdeveniments propers</h2><svg class="absolute top-[14px] right-[15px] h-3 w-[27px]"><use href="#dock"/></svg></div>
            <p class="pt-[15px] pl-[25px]">No hi ha esdeveniments propers.</p>
            <p class="pt-[21px] pl-[10.500px] text-[#2a2ac8]">Ves al calendari...</p>
          </section>
          <section class="h-[155px] overflow-hidden rounded-[4px] border border-[#555]">
            <div class="relative flex h-[63px] items-center border-b-2 border-[#555] bg-[#1e1dc8] pt-[5px] pl-[9px] text-[#ececff]"><svg class="mt-[-4px] size-[21px] fill-current"><use href="#clock"/></svg><h2 class="ml-1 font-['DejaVu_Serif_Condensed','DejaVu_Serif',serif] text-[16.500px]">Activitat recent</h2><svg class="absolute top-[14px] right-[15px] h-3 w-[27px]"><use href="#dock"/></svg></div>
            <p class="pt-[11px] pl-px text-center">Activitat des de dissabte, 5 novembre 2022, 12:31</p>
            <p class="pl-px text-center text-[#2a2ac8]">Informe complet d'activitat recent...</p>
            <p class="pl-[10.500px]">Sense activitat recent</p>
          </section>
          <section class="h-[300px] overflow-hidden rounded-[4px] border border-[#555]">
            <div class="relative flex h-[63px] items-center border-b-2 border-[#555] bg-[#1e1dc8] pt-[5px] pl-[10px] text-[#ececff]"><svg class="mt-[-4px] size-5 fill-current"><use href="#cal"/></svg><h2 class="ml-[5px] font-['DejaVu_Serif_Condensed','DejaVu_Serif',serif] text-[16.400px]">Calendari</h2><svg class="absolute top-[14px] right-[15px] h-3 w-[27px]"><use href="#dock"/></svg></div>
            <div class="mx-auto w-[280px] pt-[10px]">
              <div class="flex h-5 items-center justify-between pl-px text-[#2a2ac8]"><svg class="mt-1 h-2 w-[11px]" viewBox="0 0 11 8" fill="#1e1dc8"><path d="M11 0V8L0 4Z"/></svg><span class="pt-px">novembre 2022</span><svg class="mt-1 h-2 w-[11px]" viewBox="0 0 11 8" fill="#1e1dc8"><path d="M0 0V8L11 4Z"/></svg></div>
              <div class="grid auto-rows-[20px] grid-cols-7 text-center text-[11.500px] [&>b]:rounded-t-[4px] [&>b]:bg-[#1e1dc8] [&>b]:pt-px [&>b]:text-[12px] [&>b]:font-normal [&>b]:tracking-wide [&>b]:text-[#333] [&>i]:pt-px [&>i]:text-[#aaa] [&>i]:not-italic [&>span]:pt-px">
                <b>dl</b><b>dt</b><b>dc</b><b>dj</b><b>dv</b><b>ds</b><b>dg</b>
                <span></span><span>1</span><span>2</span><span>3</span><span class="bg-[#ffd3bd] text-[#2a2ac8]">4</span><i>5</i><i>6</i>
                <span class="text-[#2a2ac8]">7</span><span>8</span><span>9</span><span>10</span><span>11</span><i>12</i><i>13</i>
                <span>14</span><span>15</span><span>16</span><span>17</span><span>18</span><i>19</i><i>20</i>
                <span>21</span><span>22</span><span>23</span><span>24</span><span>25</span><i>26</i><i>27</i>
                <span>28</span><span>29</span><span>30</span>
              </div>
            </div>
            <div class="mt-[27px] flex pl-[10px] text-[#2a2ac8]"><i class="mt-0.5 h-5 w-[33px] bg-[#d0f5c8]"></i><svg class="mt-1 ml-[5px] size-[15px]" viewBox="0 0 15 15"><circle cx="7.500" cy="7.500" r="6" fill="none" stroke="#999" stroke-width="3"/></svg><span class="ml-[6px]">Oculta els esdeveniments globals</span></div>
          </section>
        </div>

        <div class="flex w-[1337px] flex-col gap-[10px] pt-px">
          <section class="h-[166px] rounded-[4px] border border-[#1e1dc8] pt-[28px]">
            <h2 class="pl-[35px] text-[18.720px] text-[#2d2d2d]">DAM M7 Desenvolupament d'interfícies</h2>
            <div class="mt-[30px] ml-[14px] flex h-[41px] w-[1287px] border-l-3 border-[#990099] bg-[repeating-linear-gradient(90deg,#fff_0_3px,#eee_3px_9px,#fff_9px_12px)] bg-[length:100%_2px] bg-bottom bg-no-repeat pt-[5px] pl-[10px] text-[#2a2ac8]">
              <svg class="size-6" viewBox="0 0 24 24"><circle cx="12" cy="12" r="12" fill="#990099"/><g fill="none" stroke="#fff"><circle cx="12" cy="9.500" r="2.200"/><circle cx="7.500" cy="8.800" r="1.700"/><circle cx="16.500" cy="8.800" r="1.700"/><path d="M8 17Q8 12.800 12 12.800T16 17ZM7.500 15.300H5Q5 11.500 8.500 11.500M16.500 15.300H19Q19 11.500 15.500 11.500"/></g></svg>
              <a class="ml-1.5 pt-px">Fòrum de notícies</a>
            </div>
            <div class="mt-[9px] ml-[27px] flex text-[#2a2ac8]"><svg class="size-6"><use href="#pdf"/></svg><a class="ml-1.5 pt-px">Fitxa d'inici</a></div>
          </section>

          <section class="h-[439px] overflow-hidden rounded-[4px] border border-[#1e1dc8]">
            <h2 class="h-[47px] border-b border-[#1e1dc8] bg-[#3735e2] pl-[10px] font-['DejaVu_Serif_Condensed','DejaVu_Serif',serif] text-[20.370px] leading-[48px] text-[#e6e6ff]">UF 1 - Disseny i implementació d'interfícies</h2>
            <p class="mt-[50px] h-5 pl-[51.500px] text-[16px] text-[#000066]">Part 1 <span class="ml-0.5 text-[13.500px] text-[#3333ff]">- <em>GENERACIÓ D'INTERFÍCIES GRÀFIQUES</em></span></p>
            <div class="mt-[25px] ml-[44px] h-[84px] w-[1257px] border-l-3 border-[#0066cc] bg-[repeating-linear-gradient(90deg,#fff_0_3px,#eee_3px_9px,#fff_9px_12px)] bg-[length:100%_2px] bg-bottom bg-no-repeat pt-[5px] pl-[10px] text-[#2a2ac8]">
              <div class="flex"><svg class="size-6"><use href="#assign"/></svg><a class="ml-1.5">Activitat 1: Introducció (Java swing)</a></div>
              <div class="mt-[13px] ml-[30px] flex h-8 w-[203px] items-center rounded-[6px] bg-[#00cf00] pl-2 text-[13px] text-[#e8ffe8]"><svg class="mr-1 h-[11px] w-[13px] fill-white"><use href="#check"/></svg>Presentada 28 octubre 2022</div>
            </div>
            <p class="mt-[12px] h-5 pl-[51.500px] text-[16px] text-[#000066]">Part 2 <span class="ml-0.5 text-[13.500px] text-[#3333ff]">- <em>USABILITAT</em></span></p>
            <div class="mt-[30px] ml-[57px] flex text-[#2a2ac8]"><svg class="size-6"><use href="#pdf"/></svg><a class="ml-1.5 pt-px">Presentació Usabilitat</a></div>
            <div class="mt-[19px] ml-[57px] flex text-[#2a2ac8]"><svg class="size-6 rounded-full bg-[#0099cc] stroke-white"><use href="#link"/></svg><a class="ml-1.5 pt-px">Vídeo - La simplicitat ven (David Pogue)</a></div>
            <div class="mt-[14px] ml-[44px] h-[66px] w-[1257px] border-l-3 border-[#0066cc] bg-[repeating-linear-gradient(90deg,#fff_0_3px,#eee_3px_9px,#fff_9px_12px)] bg-[length:100%_2px] bg-bottom bg-no-repeat pt-[5px] pl-[10px] text-[#2a2ac8]">
              <div class="flex"><svg class="size-6"><use href="#assign"/></svg><a class="ml-1.5 pt-px">Activitat 2: Anàlisis d'usabilitat</a></div>
              <div class="mt-[9px] ml-[30px] flex items-center"><svg class="mr-1 size-3.5 fill-[#1e1dc8]"><use href="#info"/></svg>No presentada</div>
            </div>
          </section>
        </div>
      </div>
    </main>
  </div>
</div>
</body>
</html>
